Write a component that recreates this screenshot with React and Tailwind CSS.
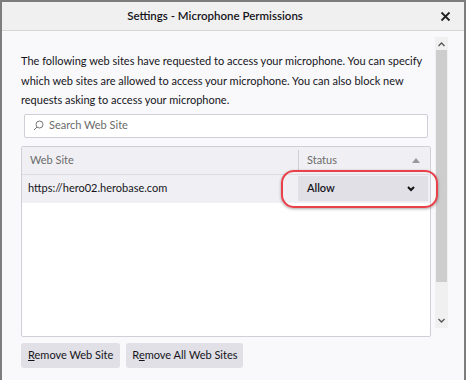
export default function App() {
  return (
    <div
      className="w-[466px] h-[380px] flex flex-col bg-[#f9f9fb] border-t-2 border-x-2 border-[#7d7d7d] text-[#15141a] overflow-hidden"
      style={{ fontFamily: 'Lato, "Open Sans", sans-serif' }}
    >
      {/* title bar */}
      <div className="h-[29px] shrink-0 bg-[#f0f0f0] border-b border-[#d6d6d6] flex items-center relative">
        <div className="w-full text-center text-[11.5px] font-semibold pr-[36px]">Settings - Microphone Permissions</div>
        <svg className="absolute right-[13px] top-[9px]" width="11" height="11" viewBox="0 0 11 11">
          <path d="M1.5 1.5 L9.5 9.5 M9.5 1.5 L1.5 9.5" stroke="#222" strokeWidth="1.8" />
        </svg>
      </div>

      <div className="flex-1 flex pl-[19px] pr-[16px] pt-[20px]">
        <div className="flex-1 flex flex-col min-w-0">
          <p className="text-[11px] leading-[19.5px] whitespace-nowrap">
            The following web sites have requested to access your microphone. You can specify
            <br />
            which web sites are allowed to access your microphone. You can also block new
            <br />
            requests asking to access your microphone.
          </p>
          <div className="mt-[4px] ml-[3px] mr-[5px] h-[24px] bg-white border border-[#cfcfd8] rounded-[2px] flex items-center px-[8px] gap-[5px] text-[11px] text-[#6a6a6a]">
            <svg width="11" height="11" viewBox="0 0 11 11" fill="none" stroke="#777" strokeWidth="1">
              <circle cx="6.5" cy="4.5" r="3.5" />
              <path d="M4 7 L1 10" />
            </svg>
            <span>Search Web Site</span>
          </div>

          <div className="mt-[8px] mr-[2px] h-[191px] bg-white border border-[#cfcfd8] rounded-[2px] flex flex-col text-[11px]">
            <div className="h-[28px] bg-[#f0f0f4] border-b border-[#dcdce2] flex items-center text-[#6b6b6b]">
              <div className="w-[277px] pl-[8px] border-r border-[#cfcfd8] h-[20px] flex items-center">Web Site</div>
              <div className="flex-1 pl-[8px] pr-[10px] flex items-center justify-between">
                <span>Status</span>
                <svg width="8" height="5" viewBox="0 0 8 5"><path d="M0 5 L4 0 L8 5 Z" fill="#9a9a9a" /></svg>
              </div>
            </div>
            <div className="h-[28px] bg-[#f0f0f4] flex items-center relative">
              <div className="w-[276px] pl-[6px] text-[#15141a]">https://hero02.herobase.com</div>
              <div className="w-[130px] h-[25px] bg-[#e0e0e6] flex items-center justify-between pl-[9px] pr-[13px] font-semibold">
                <span>Allow</span>
                <svg width="8" height="6" viewBox="0 0 8 6"><path d="M1 1 L4 4 L7 1" stroke="#111" strokeWidth="2" fill="none" /></svg>
              </div>
              <div className="absolute left-[259px] top-[-5px] w-[157px] h-[38px] rounded-[13px] border-2 border-[#e8414a] shadow-[0_1px_3px_rgba(0,0,0,0.35)]" />
            </div>
          </div>

          <div className="mt-[6px] flex gap-[6px] text-[11px]">
            <button className="h-[25px] px-[7px] bg-[#e0e0e6] rounded-[3px]">
              <span className="underline">R</span>emove Web Site
            </button>
            <button className="h-[25px] px-[6px] bg-[#e0e0e6] rounded-[3px]">
              R<span className="underline">e</span>move All Web Sites
            </button>
          </div>
        </div>

        {/* scrollbar */}
        <div className="w-[13px] h-[291px] ml-[2px] mt-[-14px] bg-[#f0f0f0] flex flex-col items-center">
          <svg className="mt-[5px] mb-[3px]" width="7" height="5" viewBox="0 0 7 5"><path d="M0.5 4 L3.5 1 L6.5 4" stroke="#555" strokeWidth="1.3" fill="none" /></svg>
          <div className="w-[11px] h-[232px] bg-[#cdcdcd]" />
          <div className="flex-1" />
          <svg className="mb-[5px]" width="7" height="5" viewBox="0 0 7 5"><path d="M0.5 1 L3.5 4 L6.5 1" stroke="#555" strokeWidth="1.3" fill="none" /></svg>
        </div>
      </div>
    </div>
  );
}
